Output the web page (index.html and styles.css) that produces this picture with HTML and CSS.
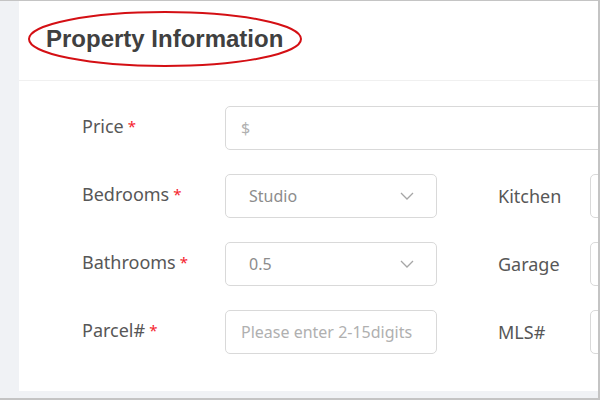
FILE: index.html
```html
<!DOCTYPE html>
<html>
<head>
<meta charset="utf-8">
<link rel="stylesheet" href="styles.css">
</head>
<body>
<div class="frame">
  <div class="card">
    <div class="card-head">
      <h1 class="title">Property Information</h1>
      <svg class="circle" width="280" height="60" viewBox="0 0 280 60"><ellipse cx="139" cy="29" rx="136" ry="27" fill="none" stroke="#d40f14" stroke-width="2"/></svg>
    </div>
    <div class="form">
      <div class="label">Price <span class="req">*</span></div>
      <div class="field wide"><span class="ph">$</span></div>

      <div class="label">Bedrooms <span class="req">*</span></div>
      <div class="field select"><span class="val">Studio</span><svg class="chev" width="14" height="8" viewBox="0 0 14 8"><path d="M1 1 L7 7 L13 1" fill="none" stroke="#a6a6a6" stroke-width="1.3"/></svg></div>
      <div class="label rlabel">Kitchen</div>
      <div class="field rfield"></div>

      <div class="label">Bathrooms <span class="req">*</span></div>
      <div class="field select"><span class="val">0.5</span><svg class="chev" width="14" height="8" viewBox="0 0 14 8"><path d="M1 1 L7 7 L13 1" fill="none" stroke="#a6a6a6" stroke-width="1.3"/></svg></div>
      <div class="label rlabel">Garage</div>
      <div class="field rfield"></div>

      <div class="label">Parcel# <span class="req">*</span></div>
      <div class="field"><span class="ph">Please enter 2-15digits</span></div>
      <div class="label rlabel">MLS#</div>
      <div class="field rfield"></div>
    </div>
  </div>
</div>
</body>
</html>
```

FILE: styles.css
```css
html, body {
  margin: 0;
  padding: 0;
  background: #fff;
}
.frame {
  box-sizing: border-box;
  width: 600px;
  height: 400px;
  border-top: 1px solid #c4c4c4;
  border-right: 2px solid #c4c4c4;
  border-bottom: 2px solid #c4c4c4;
  background: #f0f2f5;
  padding: 0 0 7px 19px;
  overflow: hidden;
}
.card {
  background: #fff;
  height: 100%;
  overflow: hidden;
}
.card-head {
  position: relative;
  height: 79px;
  border-bottom: 1px solid #f0f0f0;
  padding-left: 27px;
  display: flex;
  align-items: center;
}
.title {
  margin: 0;
  font-family: "Liberation Sans", Arial, sans-serif;
  font-weight: bold;
  font-size: 24px;
  color: #404040;
  position: relative;
  top: -2px;
}
.circle {
  position: absolute;
  left: 7px;
  top: 9px;
}
.form {
  display: grid;
  grid-template-columns: 143px 212px 61px 92px 200px;
  grid-auto-rows: 44px;
  row-gap: 24px;
  padding: 25px 0 0 63px;
  font-family: "Noto Sans", "Open Sans", sans-serif;
}
.label {
  display: flex;
  align-items: center;
  font-size: 18px;
  color: #575757;
  grid-column: 1;
  position: relative;
  top: -2px;
}
.req {
  color: #f5222d;
  margin-left: 4px;
  font-size: 15px;
}
.rlabel {
  grid-column: 4;
  top: 0;
}
.field {
  box-sizing: border-box;
  border: 1px solid #d9d9d9;
  border-radius: 5px;
  display: flex;
  align-items: center;
  padding: 0 15px;
  font-size: 16px;
  grid-column: 2;
}
.wide {
  grid-column: 2 / 6;
  margin-right: -100px;
}
.rfield {
  grid-column: 5;
}
.ph {
  color: #b0b0b0;
}
.select {
  justify-content: space-between;
  padding: 0 22px 0 23px;
}
.val {
  color: #8c8c8c;
}
.chev {
  display: block;
}
```
